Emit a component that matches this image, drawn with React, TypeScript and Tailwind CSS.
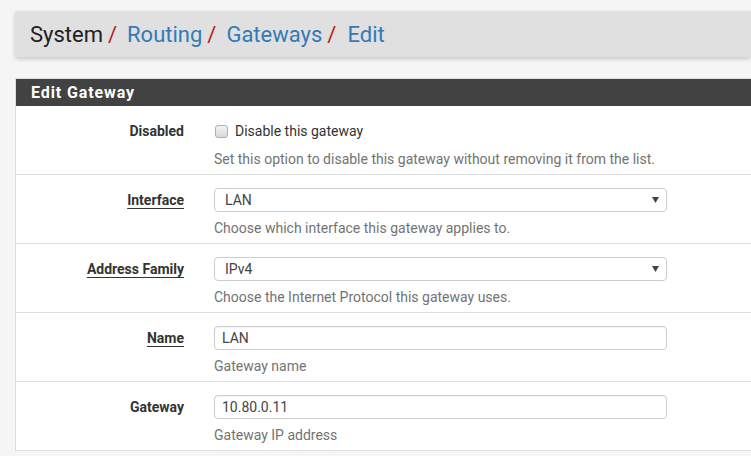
import React from 'react'

type Row = {
  label: string
  required?: boolean
  kind: 'checkbox' | 'select' | 'input'
  value: string
  help: string
}

const ROWS: Row[] = [
  { label: 'Disabled', kind: 'checkbox', value: 'Disable this gateway', help: 'Set this option to disable this gateway without removing it from the list.' },
  { label: 'Interface', required: true, kind: 'select', value: 'LAN', help: 'Choose which interface this gateway applies to.' },
  { label: 'Address Family', required: true, kind: 'select', value: 'IPv4', help: 'Choose the Internet Protocol this gateway uses.' },
  { label: 'Name', required: true, kind: 'input', value: 'LAN', help: 'Gateway name' },
  { label: 'Gateway', kind: 'input', value: '10.80.0.11', help: 'Gateway IP address' },
]

function Control({ row }: { row: Row }) {
  if (row.kind === 'checkbox') {
    return (
      <label className="flex h-6 items-center gap-[7px] text-[14px] text-[#333]">
        <span className="ml-px h-[13px] w-[13px] rounded-[3px] border border-[#8fb5e8] bg-gradient-to-b from-[#f4f4f4] to-[#d8d8d8]" />
        {row.value}
      </label>
    )
  }
  if (row.kind === 'select') {
    return (
      <div className="flex h-6 w-[453px] items-center justify-between rounded-[4px] border border-[#ccc] bg-white pl-[10px] pr-[6px] text-[14px] text-[#444]">
        <span>{row.value}</span>
        <svg width="7" height="6" viewBox="0 0 7 6" className="mr-[1px]">
          <path d="M0 0h7L3.5 6z" fill="#444" />
        </svg>
      </div>
    )
  }
  return (
    <div className="flex h-6 w-[453px] items-center rounded-[4px] border border-[#ccc] bg-white px-[7px] text-[14px] text-[#444] shadow-[inset_0_1px_1px_rgba(0,0,0,0.05)]">
      {row.value}
    </div>
  )
}

export default function App() {
  return (
    <div className="min-h-screen bg-[#f5f5f5] pl-[15px] pt-[11px] font-['Roboto',sans-serif]">
      {/* Breadcrumb */}
      <div className="flex h-[46px] items-center rounded-l-[3px] bg-[#e0e0e0] pl-[15px] text-[22px] shadow-[0_2px_4px_rgba(0,0,0,0.18)]">
        <span className="text-[#212121]">System</span>
        <span className="ml-[5px] mr-[10px] text-[#b71c1c]">/</span>
        <span className="text-[#337ab7]">Routing</span>
        <span className="ml-[5px] mr-[10px] text-[#b71c1c]">/</span>
        <span className="text-[#337ab7]">Gateways</span>
        <span className="ml-[5px] mr-[10px] text-[#b71c1c]">/</span>
        <span className="ml-px text-[#337ab7]">Edit</span>
      </div>

      {/* Panel */}
      <div className="mt-[21px] border-l border-t border-[#ddd] bg-white">
        <div className="flex h-[27px] items-center bg-[#424242] pl-[15px] text-[16px] font-bold tracking-[0.9px] text-white">
          Edit Gateway
        </div>
        {ROWS.map((row) => (
          <div key={row.label} className="flex border-b border-[#e0e0e0] pb-[5px] pt-[13px]">
            <div className="flex h-6 w-[168px] items-center justify-end text-[14px] font-bold text-[#333]">
              <span className={row.required ? 'underline decoration-1 underline-offset-[3px]' : ''}>{row.label}</span>
            </div>
            <div className="ml-[30px] flex flex-col">
              <Control row={row} />
              <div className="mt-[6px] h-5 text-[14px] leading-5 text-[#737373]">{row.help}</div>
            </div>
          </div>
        ))}
      </div>
    </div>
  )
}
